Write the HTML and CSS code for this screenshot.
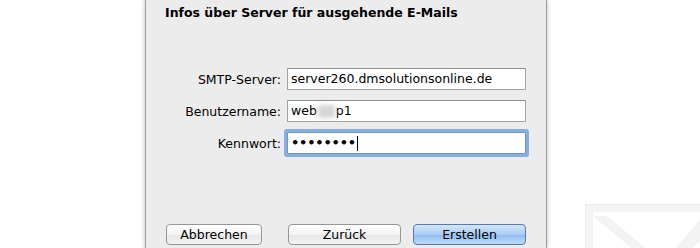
FILE: index.html
```html
<!DOCTYPE html>
<html lang="de">
<head>
  <meta charset="UTF-8" />
  <title>Mail – Account hinzufügen</title>
  <link rel="stylesheet" href="styles.css">
</head>
<body>
  <div class="left"></div>
  <div class="sheet">
    <h1>Infos über Server für ausgehende E-Mails</h1>
    <div class="form">
      <label>SMTP-Server:</label>
      <div class="field">server260.dmsolutionsonline.de</div>
      <label>Benutzername:</label>
      <div class="field">web<span class="blur"></span>p1</div>
      <label>Kennwort:</label>
      <div class="field focus"><span class="dots">••••••••</span><span class="caret"></span></div>
    </div>
    <div class="buttons">
      <button class="btn cancel">Abbrechen</button>
      <button class="btn back">Zurück</button>
      <button class="btn primary">Erstellen</button>
    </div>
  </div>
  <div class="right">
    <svg class="envelope" width="130" height="50" viewBox="0 0 130 50">
      <rect x="4" y="4" width="140" height="80" fill="none" stroke="#f4f4f4" stroke-width="8"/>
      <rect x="0.5" y="0.5" width="150" height="90" fill="none" stroke="#ececec" stroke-width="1"/>
      <polygon points="8,12 22,12 70,52 56,52" fill="#f3f3f3"/>
      <polygon points="118,12 132,12 132,22 98,52 84,52" fill="#f3f3f3"/>
    </svg>
  </div>
</body>
</html>
```

FILE: styles.css
```css
* { box-sizing: border-box; margin: 0; padding: 0; }
body {
  font-family: "DejaVu Sans", Verdana, sans-serif;
  font-size: 12px;
  color: #000;
  background: #fff;
  display: flex;
  width: 700px;
  height: 248px;
  overflow: hidden;
}
.left { width: 145px; flex-shrink: 0; }
.sheet {
  width: 402px;
  flex-shrink: 0;
  height: 248px;
  background: #ececec;
  border-left: 1px solid #9c9c9c;
  border-right: 1px solid #9c9c9c;
  box-shadow: -2px 0 3px rgba(0,0,0,0.12), 2px 0 3px rgba(0,0,0,0.12);
  padding: 0 20px 0 19px;
  display: flex;
  flex-direction: column;
}
.sheet h1 {
  font-size: 12.5px;
  font-weight: bold;
  margin-top: 5px;
  line-height: 15px;
}
.form {
  margin-top: 48px;
  display: grid;
  grid-template-columns: 1fr 239px;
  column-gap: 6px;
  row-gap: 10px;
  align-items: center;
}
.form label {
  text-align: right;
  font-size: 12.5px;
}
.field {
  height: 22px;
  background: #fff;
  border: 1px solid #a4a4a4;
  border-top-color: #8e8e8e;
  padding: 0 3px;
  line-height: 20px;
  font-size: 12.5px;
  display: flex;
  align-items: center;
  white-space: nowrap;
}
.blur {
  display: inline-block;
  width: 17px;
  height: 13px;
  background: #d6d6d6;
  filter: blur(2px);
  margin: 0 1px;
}
.focus {
  border-color: #6d95c8;
  box-shadow: 0 0 0 3px #86aee0;
  border-radius: 1px;
}
.dots {
  font-size: 13px;
  font-weight: bold;
  letter-spacing: -0.2px;
}
.caret {
  display: inline-block;
  width: 1px;
  height: 15px;
  background: #000;
  margin-left: 1px;
}
.buttons {
  margin-top: auto;
  margin-bottom: 3px;
  display: flex;
  padding-left: 1px;
}
.btn {
  font-family: "DejaVu Sans", Verdana, sans-serif;
  font-size: 12.5px;
  height: 21px;
  border: 1px solid #969696;
  border-radius: 4px;
  background: linear-gradient(#ffffff, #f3f3f3 50%, #e6e6e6 51%, #f4f4f4);
  color: #000;
}
.cancel { width: 96px; }
.back { width: 113px; margin-left: 26px; }
.primary {
  width: 113px;
  margin-left: 12px;
  border-color: #5a79a6;
  background: linear-gradient(#d2e6fb, #a8cdf5 50%, #8fbcee 51%, #bcdcfb);
}
.right {
  flex: 1;
  min-width: 0;
  padding-left: 38px;
  padding-top: 204px;
}
.envelope { display: block; }
```
